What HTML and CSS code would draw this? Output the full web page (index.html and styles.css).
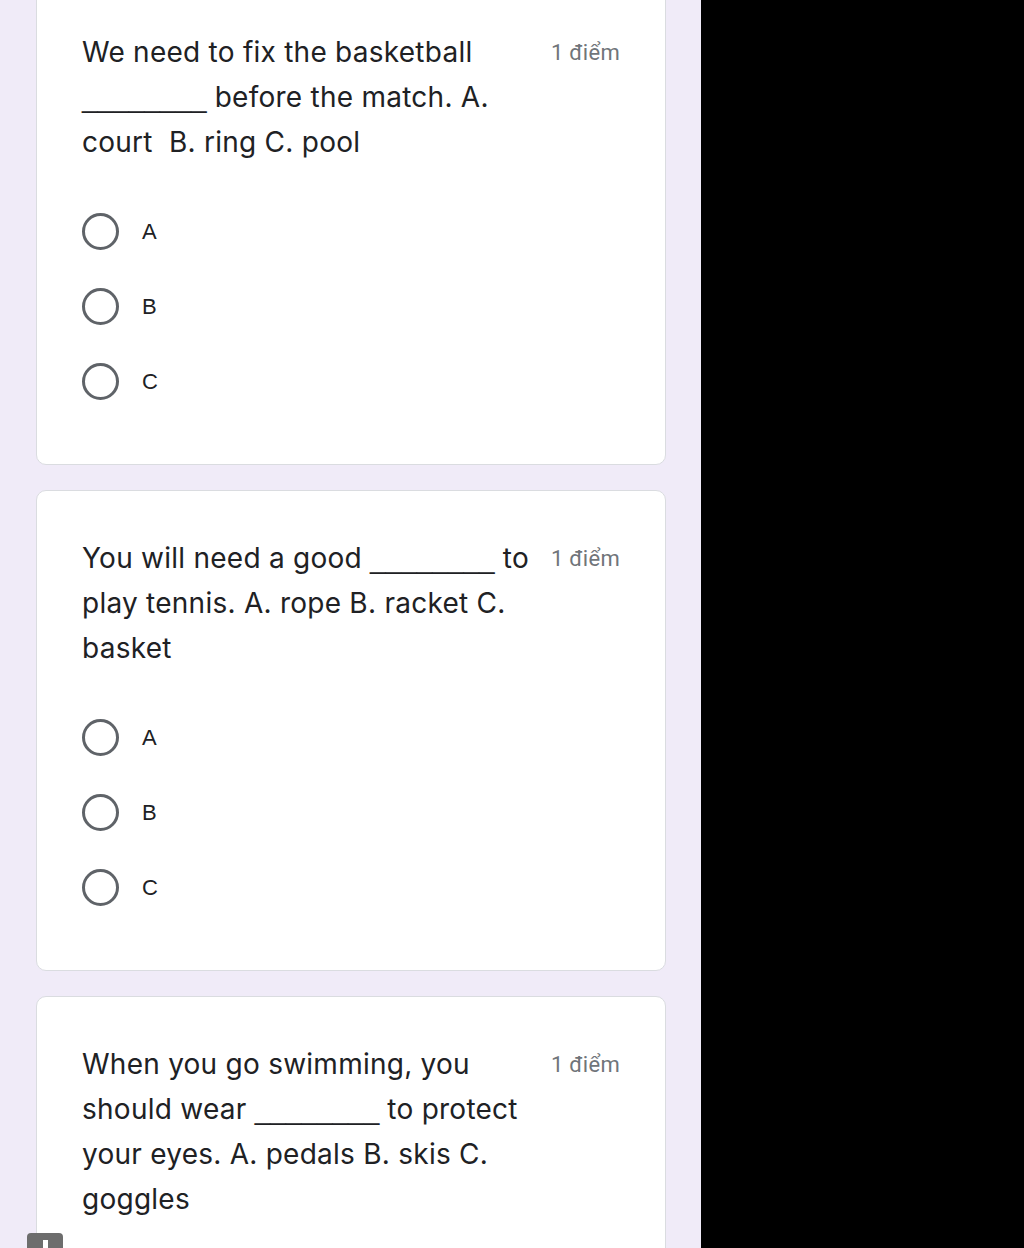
FILE: index.html
```html
<!DOCTYPE html>
<html>
<head>
    <title>Quiz</title>
    <link rel="stylesheet" href="styles.css">
</head>
<body>
    <div class="page">
        <div class="form">
            <div class="card first">
                <div class="question-head">
                    <div class="question-text">We need to fix the basketball<br><span class="blank">________</span> before the match. A.<br>court&nbsp; B. ring C. pool</div>
                    <div class="points">1 điểm</div>
                </div>
                <div class="options">
                    <label class="option"><span class="radio"></span><span class="option-label">A</span></label>
                    <label class="option"><span class="radio"></span><span class="option-label">B</span></label>
                    <label class="option"><span class="radio"></span><span class="option-label">C</span></label>
                </div>
            </div>

            <div class="card">
                <div class="question-head">
                    <div class="question-text">You will need a good <span class="blank">________</span> to<br>play tennis. A. rope B. racket C.<br>basket</div>
                    <div class="points">1 điểm</div>
                </div>
                <div class="options">
                    <label class="option"><span class="radio"></span><span class="option-label">A</span></label>
                    <label class="option"><span class="radio"></span><span class="option-label">B</span></label>
                    <label class="option"><span class="radio"></span><span class="option-label">C</span></label>
                </div>
            </div>

            <div class="card last">
                <div class="question-head">
                    <div class="question-text">When you go swimming, you<br>should wear <span class="blank">________</span> to protect<br>your eyes. A. pedals B. skis C.<br>goggles</div>
                    <div class="points">1 điểm</div>
                </div>
            </div>

            <div class="float-button"><span class="float-bar"></span></div>
        </div>
        <div class="blackout"></div>
    </div>
</body>
</html>
```

FILE: styles.css
```css
html, body {
    margin: 0;
    padding: 0;
    height: 100%;
    overflow: hidden;
}
body {
    font-family: Inter, "Open Sans", Roboto, sans-serif;
    color: #202124;
}
.page {
    display: flex;
    height: 1248px;
}
.form {
    position: relative;
    width: 701px;
    background: #f0ebf8;
    padding: 0 36px;
    box-sizing: border-box;
    overflow: hidden;
}
.blackout {
    flex: 1;
    background: #000;
}
.card {
    background: #fff;
    border: 1px solid #dadce0;
    border-radius: 10px;
    margin: 0 0 25px 0;
    width: 630px;
    padding: 45px 45px 45px 45px;
    box-sizing: border-box;
}
.card.first {
    margin-top: -16px;
}
.card.last {
    padding-bottom: 120px;
}
.question-head {
    display: flex;
    align-items: flex-start;
    gap: 16px;
}
.question-text {
    flex: 1;
    font-size: 28px;
    line-height: 45px;
    letter-spacing: 0.25px;
    white-space: nowrap;
}
.blank {
    font-family: "Liberation Sans", Arial, sans-serif;
    letter-spacing: 0;
}
.points {
    font-family: Roboto, "Liberation Sans", Arial, sans-serif;
    font-size: 22px;
    line-height: 45px;
    letter-spacing: 0.3px;
    color: #70757a;
    white-space: nowrap;
}
.options {
    margin-top: 29px;
    display: flex;
    flex-direction: column;
}
.option {
    display: flex;
    align-items: center;
    height: 75px;
}
.radio {
    width: 37px;
    height: 37px;
    border: 3.5px solid #5f6368;
    border-radius: 50%;
    box-sizing: border-box;
}
.option-label {
    margin-left: 23px;
    font-size: 22px;
    font-family: "Liberation Sans", Arial, sans-serif;
    color: #202124;
}
.float-button {
    position: absolute;
    left: 27px;
    top: 1233px;
    width: 36px;
    height: 30px;
    background: #6d6d6d;
    border-radius: 4px 4px 0 0;
    display: flex;
    justify-content: center;
}
.float-bar {
    width: 5px;
    height: 20px;
    margin-top: 7px;
    background: #fff;
}
```
